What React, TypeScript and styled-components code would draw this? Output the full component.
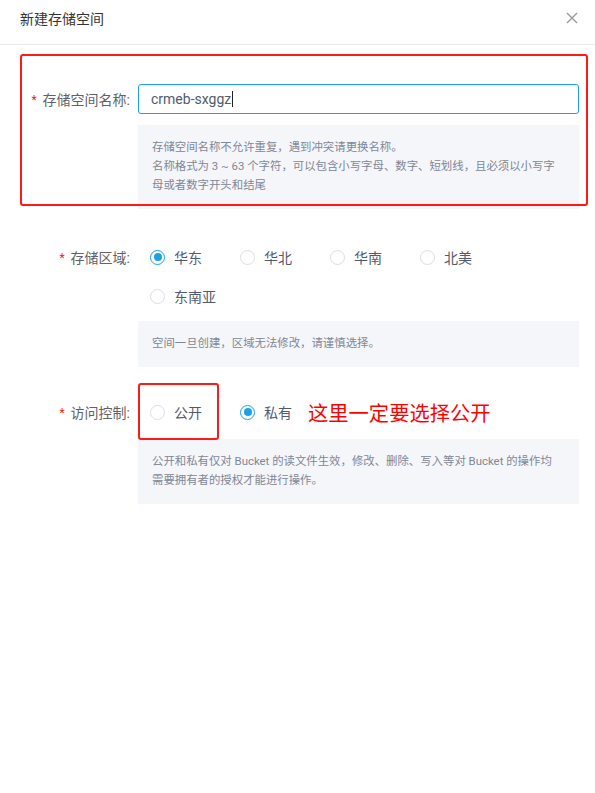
import React from "react";
import styled, { createGlobalStyle } from "styled-components";

const primary = "#1ba1e6";

const GlobalStyle = createGlobalStyle`
  html, body {
    margin: 0;
    padding: 0;
    background: #fff;
  }
  body {
    font-family: "Roboto", "Noto Sans CJK SC", sans-serif;
    color: #515a6e;
  }
`;

const Modal = styled.div`
  width: 595px;
  height: 793px;
  background: #fff;
`;

const Header = styled.div`
  height: 45px;
  display: flex;
  align-items: center;
  justify-content: space-between;
  padding: 0 16px 0 20px;
  border-bottom: 1px solid #e8eaec;
  box-sizing: border-box;
`;

const Title = styled.div`
  font-size: 14px;
  color: #333;
  margin-top: -8px;
`;

const CloseButton = styled.button`
  border: 0;
  background: none;
  padding: 0;
  width: 14px;
  height: 14px;
  display: flex;
  margin-top: -8px;
  cursor: pointer;
`;

const Body = styled.div`
  padding: 0 16px 0 20px;
  display: flex;
  flex-direction: column;
`;

const FormItem = styled.div<{ $top: number }>`
  position: relative;
  display: grid;
  grid-template-columns: 118px 1fr;
  margin-top: ${(p) => p.$top}px;
`;

const Label = styled.label`
  display: flex;
  justify-content: flex-end;
  align-items: center;
  height: 30px;
  padding-right: 8px;
  font-size: 14px;
  color: #606266;
  white-space: nowrap;
`;

const Star = styled.span`
  color: #ed1c24;
  font-size: 12px;
  margin-right: 6px;
  margin-top: 2px;
`;

const Content = styled.div`
  display: flex;
  flex-direction: column;
  width: 441px;
`;

const Input = styled.div`
  height: 30px;
  box-sizing: border-box;
  border: 1px solid ${primary};
  border-radius: 3px;
  display: flex;
  align-items: center;
  padding-left: 12px;
  font-size: 14px;
  color: #515a6e;
`;

const Caret = styled.span`
  display: inline-block;
  width: 1px;
  height: 16px;
  background: #222;
  margin-left: 1px;
`;

const Tip = styled.div<{ $top: number }>`
  margin-top: ${(p) => p.$top}px;
  background: #f5f6fa;
  padding: 13px 14px 14px;
  font-size: 11.4px;
  line-height: 19px;
  color: #808695;
  white-space: nowrap;
`;

const RadioGroup = styled.div`
  display: flex;
  flex-wrap: wrap;
  row-gap: 9px;
  padding-left: 12px;
`;

const RadioItem = styled.div`
  position: relative;
  width: 90px;
  height: 30px;
  display: flex;
  align-items: center;
  font-size: 14px;
  color: #515a6e;
  white-space: nowrap;
`;

const RadioCircle = styled.span<{ $checked?: boolean }>`
  flex: none;
  width: 15px;
  height: 15px;
  box-sizing: border-box;
  border-radius: 50%;
  border: 1px solid ${(p) => (p.$checked ? primary : "#dcdee2")};
  margin-right: 9px;
  display: flex;
  align-items: center;
  justify-content: center;
  &::after {
    content: "";
    display: ${(p) => (p.$checked ? "block" : "none")};
    width: 8px;
    height: 8px;
    border-radius: 50%;
    background: ${primary};
  }
`;

const Note = styled.span`
  margin-left: 16px;
  font-size: 20.3px;
  color: #ff0000;
  white-space: nowrap;
  display: flex;
  align-items: center;
  height: 30px;
`;

const Highlight = styled.div`
  position: absolute;
  border: 2px solid #ff1a1a;
  border-radius: 3px;
  box-sizing: border-box;
  pointer-events: none;
`;

const FirstHighlight = styled(Highlight)`
  left: 0;
  top: -30px;
  width: 568px;
  height: 152px;
`;

const RadioHighlight = styled(Highlight)`
  left: -12px;
  top: -14px;
  width: 81px;
  height: 57px;
`;

const Radio: React.FC<{ label: string; checked?: boolean; children?: React.ReactNode }> = ({
  label,
  checked,
  children,
}) => (
  <RadioItem>
    <RadioCircle $checked={checked} />
    {label}
    {children}
  </RadioItem>
);

const regions = ["华东", "华北", "华南", "北美", "东南亚"];

export default function App() {
  return (
    <Modal>
      <GlobalStyle />
      <Header>
        <Title>新建存储空间</Title>
        <CloseButton aria-label="close">
          <svg width="14" height="14" viewBox="0 0 14 14">
            <path d="M2 2 L12 12 M12 2 L2 12" stroke="#999" strokeWidth="1.4" fill="none" />
          </svg>
        </CloseButton>
      </Header>
      <Body>
        <FormItem $top={39}>
          <Label>
            <Star>*</Star>存储空间名称:
          </Label>
          <Content>
            <Input>
              crmeb-sxggz
              <Caret />
            </Input>
            <Tip $top={11}>
              存储空间名称不允许重复，遇到冲突请更换名称。
              <br />
              名称格式为 3 ~ 63 个字符，可以包含小写字母、数字、短划线，且必须以小写字
              <br />
              母或者数字开头和结尾
            </Tip>
          </Content>
          <FirstHighlight />
        </FormItem>

        <FormItem $top={33}>
          <Label>
            <Star>*</Star>存储区域:
          </Label>
          <Content>
            <RadioGroup>
              {regions.map((r, i) => (
                <Radio key={r} label={r} checked={i === 0} />
              ))}
            </RadioGroup>
            <Tip $top={10}>空间一旦创建，区域无法修改，请谨慎选择。</Tip>
          </Content>
        </FormItem>

        <FormItem $top={30}>
          <Label>
            <Star>*</Star>访问控制:
          </Label>
          <Content>
            <RadioGroup>
              <Radio label="公开">
                <RadioHighlight />
              </Radio>
              <Radio label="私有" checked>
                <Note>这里一定要选择公开</Note>
              </Radio>
            </RadioGroup>
            <Tip $top={12}>
              公开和私有仅对 Bucket 的读文件生效，修改、删除、写入等对 Bucket 的操作均
              <br />
              需要拥有者的授权才能进行操作。
            </Tip>
          </Content>
        </FormItem>
      </Body>
    </Modal>
  );
}
